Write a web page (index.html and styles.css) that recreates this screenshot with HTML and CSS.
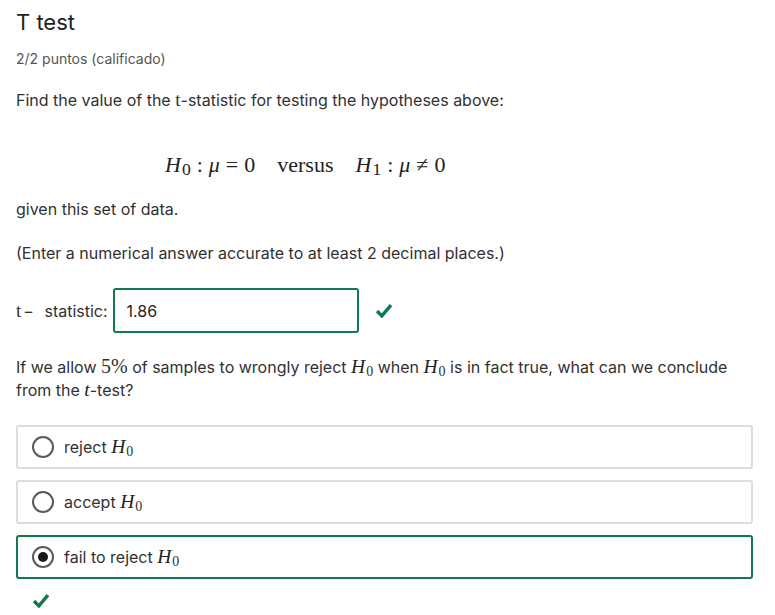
FILE: index.html
```html
<!DOCTYPE html>
<html>
<head>
<meta charset="utf-8">
<link rel="stylesheet" href="styles.css">
</head>
<body>
<div class="problem">
  <h2 class="title">T test</h2>
  <div class="points">2/2 puntos (calificado)</div>
  <p class="para first">Find the value of the <span class="mrm">t</span>-statistic for testing the hypotheses above:</p>
  <div class="display">
    <span class="mi">H</span><sub class="sub">0</sub><span class="rel">:</span><span class="mi">μ</span><span class="rel">=</span><span class="num">0</span><span class="text">versus</span><span class="mi">H</span><sub class="sub">1</sub><span class="rel">:</span><span class="mi">μ</span><span class="rel">≠</span><span class="num">0</span>
  </div>
  <p class="para">given this set of data.</p>
  <p class="para">(Enter a numerical answer accurate to at least 2 decimal places.)</p>
  <div class="answer-row">
    <label class="label"><span class="mrm">t</span><span class="minus">−</span> statistic:</label>
    <div class="input">1.86</div>
    <svg class="check" viewBox="0 0 16 14" width="18" height="15"><path d="M1.5 7.5 L6 12 L14.5 2" fill="none" stroke="#107a4a" stroke-width="3.2"/></svg>
  </div>
  <p class="para question">If we allow <span class="mnum">5%</span> of samples to wrongly reject <span class="mi">H</span><sub class="sub">0</sub> when <span class="mi">H</span><sub class="sub">0</sub> is in fact true, what can we conclude from the <span class="mi">t</span>-test?</p>
  <div class="options">
    <div class="option">
      <span class="radio"></span>
      <span class="opt-text">reject <span class="mi">H</span><sub class="sub">0</sub></span>
    </div>
    <div class="option">
      <span class="radio"></span>
      <span class="opt-text">accept <span class="mi">H</span><sub class="sub">0</sub></span>
    </div>
    <div class="option selected">
      <span class="radio checked"></span>
      <span class="opt-text">fail to reject <span class="mi">H</span><sub class="sub">0</sub></span>
    </div>
  </div>
  <svg class="check bottom" viewBox="0 0 16 14" width="18" height="15"><path d="M1.5 7.5 L6 12 L14.5 2" fill="none" stroke="#107a4a" stroke-width="3.2"/></svg>
</div>
</body>
</html>
```
FILE: styles.css
```css
* { box-sizing: border-box; }
body {
  margin: 0;
  background: #fff;
  font-family: Inter, "Open Sans", sans-serif;
  color: #313131;
}
.problem {
  padding: 8px 22px 0 16px;
}
.title {
  margin: 0;
  font-size: 22px;
  font-weight: 400;
  line-height: 28px;
  color: #222;
}
.points {
  margin-top: 14px;
  font-size: 14px;
  line-height: 18px;
  color: #555;
}
.para {
  margin: 0;
  font-size: 16px;
  line-height: 23px;
}
.para.first { margin-top: 21px; }
.display {
  padding: 41px 0 0 149px;
  height: 86px;
  line-height: 24px;
  font-family: "Liberation Serif", "DejaVu Serif", serif;
  font-size: 22px;
  color: #222;
}
.mi {
  font-family: "Liberation Serif", serif;
  font-style: italic;
  font-size: 1.22em;
  line-height: 1;
  color: #222;
}
.display .mi { font-size: 1em; }
.sub {
  font-family: "Liberation Serif", serif;
  font-size: 0.8em;
  vertical-align: -3px;
  line-height: 0;
  margin-left: 1px;
}
.para .sub, .opt-text .sub { font-size: 14px; }
.rel { margin: 0 6px; }
.text { margin: 0 22px; }
.mrm {
  font-family: "Liberation Serif", serif;
  font-size: 1.2em;
  line-height: 1;
}
.mnum {
  font-family: "Liberation Serif", serif;
  font-size: 1.25em;
  line-height: 1;
}
.para + .para { margin-top: 21px; }
.answer-row {
  display: flex;
  align-items: center;
  margin-top: 23px;
  font-size: 16px;
}
.label { margin-right: 5px; }
.minus { margin: 0 6px 0 2px; }
.input {
  width: 246px;
  height: 45px;
  border: 2px solid #107a4a;
  border-radius: 3px;
  padding: 0 12px;
  display: flex;
  align-items: center;
  color: #222;
}
.check { margin-left: 16px; }
.question { margin-top: 23px; }
.options {
  display: flex;
  flex-direction: column;
  gap: 11px;
  margin-top: 23px;
}
.option {
  display: flex;
  align-items: center;
  height: 44px;
  border: 2px solid #dddddd;
  border-radius: 3px;
  padding-left: 14px;
  font-size: 16px;
}
.option.selected { border-color: #107a4a; }
.radio {
  width: 22px;
  height: 22px;
  border: 2px solid #5a5a5a;
  border-radius: 50%;
  margin-right: 10px;
  position: relative;
  flex: none;
}
.radio.checked::after {
  content: "";
  position: absolute;
  left: 4px;
  top: 4px;
  width: 10px;
  height: 10px;
  border-radius: 50%;
  background: #1a1a1a;
}
.check.bottom {
  display: block;
  margin: 14px 0 0 16px;
}
```
